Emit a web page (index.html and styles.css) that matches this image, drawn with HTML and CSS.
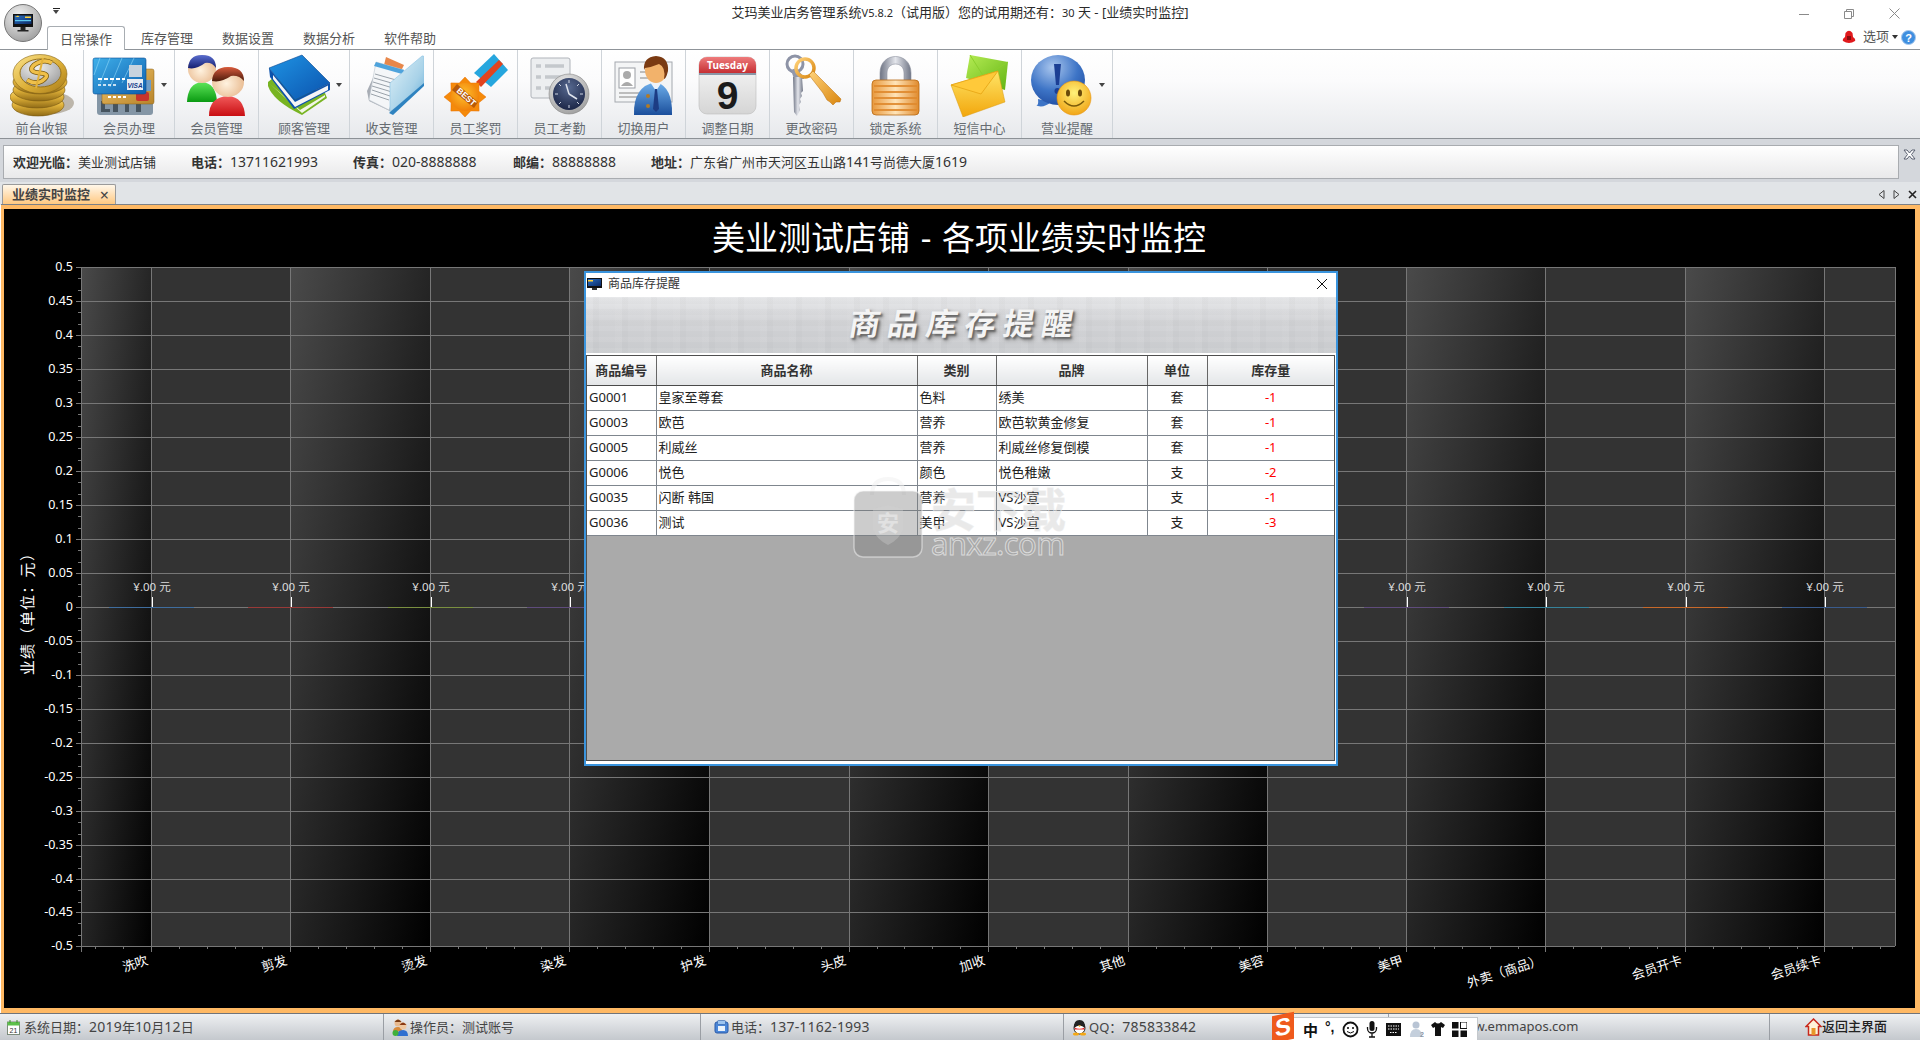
FILE: index.html
```html
<!DOCTYPE html>
<html lang="zh-CN">
<head>
<meta charset="utf-8">
<title>艾玛美业店务管理系统</title>
<link rel="stylesheet" href="styles.css">
</head>
<body>
<svg class="defs" aria-hidden="true">
  <defs>
    <linearGradient id="gGold" x1="0" y1="0" x2="0" y2="1"><stop offset="0" stop-color="#ffeb9a"/><stop offset=".5" stop-color="#e3b43a"/><stop offset="1" stop-color="#8f6a16"/></linearGradient>
    <linearGradient id="gGoldTop" x1="0" y1="0" x2="1" y2="1"><stop offset="0" stop-color="#fbe48e"/><stop offset=".55" stop-color="#dcae36"/><stop offset="1" stop-color="#a57a1a"/></linearGradient>
    <radialGradient id="gSilver" cx=".4" cy=".3" r=".8"><stop offset="0" stop-color="#f2f2f2"/><stop offset="1" stop-color="#989898"/></radialGradient>
    <linearGradient id="gCard" x1="0" y1="0" x2="1" y2="1"><stop offset="0" stop-color="#3fb0ea"/><stop offset="1" stop-color="#0f5fae"/></linearGradient>
    <linearGradient id="gCard2" x1="0" y1="0" x2="1" y2="1"><stop offset="0" stop-color="#f0c46a"/><stop offset="1" stop-color="#b8842a"/></linearGradient>
    <linearGradient id="gBook" x1="0" y1="0" x2="1" y2="1"><stop offset="0" stop-color="#1f94e4"/><stop offset="1" stop-color="#0b52ad"/></linearGradient>
    <radialGradient id="gSkin" cx=".45" cy=".55" r=".6"><stop offset="0" stop-color="#fff2df"/><stop offset="1" stop-color="#e8b98e"/></radialGradient>
    <linearGradient id="gGreen" x1="0" y1="0" x2="0" y2="1"><stop offset="0" stop-color="#5fe65a"/><stop offset="1" stop-color="#0a9a12"/></linearGradient>
    <linearGradient id="gRed" x1="0" y1="0" x2="0" y2="1"><stop offset="0" stop-color="#f25a5a"/><stop offset="1" stop-color="#c80e12"/></linearGradient>
    <linearGradient id="gHairB" x1="0" y1="0" x2="0" y2="1"><stop offset="0" stop-color="#5a6ed0"/><stop offset="1" stop-color="#141e70"/></linearGradient>
    <linearGradient id="gHairR" x1="0" y1="0" x2="0" y2="1"><stop offset="0" stop-color="#d85a3c"/><stop offset="1" stop-color="#4a1a0a"/></linearGradient>
    <linearGradient id="gGlass" x1="0" y1="0" x2="1" y2="1"><stop offset="0" stop-color="#e2f2f8"/><stop offset=".6" stop-color="#a8d2e8"/><stop offset="1" stop-color="#5ea9d6"/></linearGradient>
    <radialGradient id="gSun" cx=".45" cy=".4" r=".65"><stop offset="0" stop-color="#ffc22e"/><stop offset="1" stop-color="#ef7a05"/></radialGradient>
    <radialGradient id="gNavy" cx=".5" cy=".3" r=".8"><stop offset="0" stop-color="#56688f"/><stop offset="1" stop-color="#141d3d"/></radialGradient>
    <linearGradient id="gSuit" x1="0" y1="0" x2="0" y2="1"><stop offset="0" stop-color="#6fb0ec"/><stop offset="1" stop-color="#1b4f9c"/></linearGradient>
    <linearGradient id="gCal" x1="0" y1="0" x2="0" y2="1"><stop offset="0" stop-color="#fafafa"/><stop offset="1" stop-color="#d5d5d5"/></linearGradient>
    <linearGradient id="gCalH" x1="0" y1="0" x2="0" y2="1"><stop offset="0" stop-color="#ee7b7b"/><stop offset="1" stop-color="#c52f33"/></linearGradient>
    <linearGradient id="gSteel" x1="0" y1="0" x2="1" y2="0"><stop offset="0" stop-color="#6e7484"/><stop offset=".5" stop-color="#e4e6ec"/><stop offset="1" stop-color="#707686"/></linearGradient>
    <linearGradient id="gKey" x1="0" y1="0" x2="1" y2="1"><stop offset="0" stop-color="#ffd27a"/><stop offset="1" stop-color="#d9860f"/></linearGradient>
    <linearGradient id="gLock" x1="0" y1="0" x2="1" y2="0"><stop offset="0" stop-color="#e8983c"/><stop offset=".5" stop-color="#ffe4b8"/><stop offset="1" stop-color="#e08a2c"/></linearGradient>
    <linearGradient id="gEnvY" x1="0" y1="0" x2="0" y2="1"><stop offset="0" stop-color="#ffe566"/><stop offset="1" stop-color="#f2a60c"/></linearGradient>
    <linearGradient id="gEnvG" x1="0" y1="0" x2="1" y2="1"><stop offset="0" stop-color="#b6ec54"/><stop offset="1" stop-color="#62b414"/></linearGradient>
    <radialGradient id="gBubble" cx=".4" cy=".25" r=".85"><stop offset="0" stop-color="#a9c6ee"/><stop offset=".55" stop-color="#3d74c6"/><stop offset="1" stop-color="#1c479c"/></radialGradient>
    <radialGradient id="gSmile" cx=".5" cy=".35" r=".7"><stop offset="0" stop-color="#fff27a"/><stop offset="1" stop-color="#f0a010"/></radialGradient>
    <linearGradient id="gBand" x1="0" y1="0" x2="1" y2="1"><stop offset="0" stop-color="#4a4a4a"/><stop offset="1" stop-color="#000"/></linearGradient>
    <linearGradient id="gScreen" x1="0" y1="0" x2="1" y2="1"><stop offset="0" stop-color="#2a6fc0"/><stop offset="1" stop-color="#0d2a66"/></linearGradient>
  </defs>
</svg>

<div class="app">
  <header class="head">
    <div class="head-top">
      <button class="qat" type="button"><span class="qat-line"></span><span class="caret"></span></button>
      <div class="title">艾玛美业店务管理系统<span class="tn">V5.8.2</span>（试用版）您的试用期还有<i class="cl">：</i><span class="tn">30</span> 天 - [业绩实时监控]</div>
      <div class="winctl">
        <svg width="10" height="10" viewBox="0 0 10 10"><path d="M0 5.500H10" class="wl"/></svg>
        <svg width="10" height="10" viewBox="0 0 10 10"><path d="M.5 2.500h7v7h-7zM2.500 2.500v-2h7v7h-2" class="wl"/></svg>
        <svg width="11" height="11" viewBox="0 0 11 11"><path d="M.5.5l10 10M10.500.5l-10 10" class="wl"/></svg>
      </div>
    </div>
    <div class="head-tabs">
      <div class="mtabs">
        <span class="mtab active">日常操作</span>
        <span class="mtab">库存管理</span>
        <span class="mtab">数据设置</span>
        <span class="mtab">数据分析</span>
        <span class="mtab">软件帮助</span>
      </div>
      <div class="opts">
        <svg width="14" height="14" viewBox="0 0 14 14"><path d="M3.500 3Q7-1.500 10.500 3L11 7Q14 9 13 11Q7 15 1 11Q0 9 3 7Z" fill="#e0191c"/><rect x="5" y="6" width="4" height="4" fill="#8a0c0e"/></svg>
        <span class="opts-t">选项</span><span class="caret dark"></span>
        <svg width="15" height="15" viewBox="0 0 15 15"><circle cx="7.500" cy="7.500" r="7" fill="#3f8fe0" stroke="#a8c8ec"/><text x="7.500" y="11.500" class="help-q">?</text></svg>
      </div>
    </div>
    <svg class="orb" width="40" height="40" viewBox="0 0 40 40">
      <circle cx="20" cy="20" r="18.500" fill="url(#gSilver)" stroke="#777"/>
      <rect x="10" y="11" width="20" height="13" fill="#111"/>
      <rect x="11.500" y="12.500" width="17" height="8.500" fill="url(#gScreen)"/>
      <path d="M12 14l3-1.500 1.500 1.500zM22 13.500h6v1.500h-6z" fill="#ffd23a"/>
      <path d="M12 17h16v1.200H12z" fill="#5ec8f0"/>
      <path d="M17.500 24h5v3h3v1.500h-11V27h3z" fill="#222"/>
    </svg>
  </header>

  <nav class="ribbon">
    <div class="rb">
      <svg class="ic" viewBox="0 0 64 64">
        <ellipse cx="40" cy="50" rx="24" ry="11" fill="#7a6a50" opacity=".45"/>
        <ellipse cx="28" cy="52" rx="26" ry="11" fill="url(#gGold)" stroke="#7a5a12" stroke-width=".6"/>
        <ellipse cx="27" cy="44" rx="27" ry="11" fill="url(#gGold)" stroke="#7a5a12" stroke-width=".6"/>
        <ellipse cx="29" cy="37" rx="26" ry="11" fill="url(#gGold)" stroke="#7a5a12" stroke-width=".6"/>
        <ellipse cx="30" cy="29" rx="27" ry="12" fill="url(#gGold)" stroke="#7a5a12" stroke-width=".6"/>
        <ellipse cx="30" cy="21" rx="27" ry="19.500" fill="url(#gGoldTop)" stroke="#8a6616" stroke-width=".6"/>
        <ellipse cx="30.500" cy="20" rx="20.500" ry="14" fill="url(#gSilver)" stroke="#9a7418"/>
        <path d="M42 10Q34 5 24 12Q17 19 30 20Q42 21 32 28Q25 32 17 27" fill="none" stroke="#7a5a12" stroke-width="5"/>
        <path d="M42 10Q34 5 24 12Q17 19 30 20Q42 21 32 28Q25 32 17 27" fill="none" stroke="#f0c04a" stroke-width="3.500"/>
        <path d="M33 5L26 35" stroke="#e3b23a" stroke-width="2"/>
      </svg>
      <span class="rb-t">前台收银</span>
    </div>
    <div class="rb wide">
      <div class="rb-row">
        <svg class="ic" viewBox="0 0 64 64">
          <rect x="5" y="38" width="56" height="24" rx="3" fill="#8496a6"/>
          <path d="M9 48v11h9v-3h-5v-8zM21 48h5v11h-5zM29 48h12v3h-4v8h-4V51h-4zM44 48h5v11h-5z" fill="#46545f"/>
          <rect x="10" y="16" width="52" height="35" rx="2" fill="url(#gCard2)" stroke="#8a6218" stroke-width=".5"/>
          <path d="M16 44h3M21 44h3M26 44h3M31 44h3" stroke="#fff" stroke-width="2"/>
          <rect x="44" y="39" width="13" height="9" rx="2" fill="#c8342c"/><rect x="50" y="27" width="9" height="11" fill="#6e9cc8"/>
          <rect x="1" y="5" width="53" height="36" rx="2" fill="url(#gCard)" stroke="#0c4f96" stroke-width=".6"/>
          <path d="M8 5L2 22M18 5L8 30M30 5L18 34M42 5L30 30" stroke="#8fd8fa" stroke-width="1" opacity=".6" fill="none"/>
          <rect x="37" y="12" width="13" height="12" fill="#c7d3de"/>
          <path d="M6 26h4M12 26h4M18 26h4M24 26h4M30 26h3" stroke="#fff" stroke-width="2"/>
          <path d="M6 32h3M11 32h3M16 32h3M21 32h3" stroke="#fff" stroke-width="1.500"/>
          <rect x="35" y="26" width="16" height="11" fill="#e8edf4"/>
          <text x="43" y="35" class="visa">VISA</text>
        </svg>
        <span class="caret"></span>
      </div>
      <span class="rb-t">会员办理</span>
    </div>
    <div class="rb">
      <svg class="ic" viewBox="0 0 64 64">
        <path d="M2 49Q3 30 17 29Q31 30 32 49Z" fill="url(#gGreen)"/>
        <ellipse cx="17" cy="16" rx="14" ry="14" fill="url(#gSkin)"/>
        <path d="M3 15Q4 2 17 2Q31 2 31 15Q27 9 20 10Q11 17 3 15Z" fill="url(#gHairB)"/>
        <path d="M24 63Q24 44 43 43Q59 44 60 63Z" fill="url(#gRed)"/>
        <ellipse cx="43" cy="29" rx="16" ry="15" fill="url(#gSkin)"/>
        <path d="M27 28Q28 14 43 14Q59 14 59 28Q54 22 46 23Q36 30 27 28Z" fill="url(#gHairR)"/>
      </svg>
      <span class="rb-t">会员管理</span>
    </div>
    <div class="rb wide">
      <div class="rb-row">
        <svg class="ic" viewBox="0 0 64 64">
          <path d="M1 29L6 25L58 40L60 45L35 62Q6 48 1 33Z" fill="#78b422"/>
          <path d="M3 31L33 57L58 42L58 44L35 60Z" fill="#f2f6e6"/>
          <path d="M2 15L28 47L63 30L63 37L27 56L3 24Z" fill="#0c52ac"/>
          <path d="M6 22L28 49L61 32.500L61 37L28 54L6 26Z" fill="#f5f5f5"/>
          <path d="M35 2L63 30L28 47L2 15Z" fill="url(#gBook)" stroke="#0a468f" stroke-width=".6" stroke-linejoin="round"/>
        </svg>
        <span class="caret"></span>
      </div>
      <span class="rb-t">顾客管理</span>
    </div>
    <div class="rb">
      <svg class="ic" viewBox="0 0 64 64">
        <path d="M7 38L18 14L40 16L34 60L9 48Z" fill="#a8adb5"/>
        <path d="M26 4L44 12L40 20L24 12Z" fill="#e8874a"/>
        <path d="M16 9L44 17L29 57L9 47Z" fill="#f4f6f8" stroke="#bcc4cc" stroke-width=".6"/>
        <path d="M16 9L44 17L42 21L14 13Z" fill="#4ea3dc"/>
        <path d="M15 21L36 27M14 25L35 31M13 29L33 35M12 33L32 39M12 37L30 43M11 41L29 47" stroke="#9aa2aa" stroke-width="1"/>
        <path d="M30 30L62 3Q64 2 64 5V31L30 59Z" fill="url(#gGlass)" stroke="#8cc3e4" stroke-width=".6"/>
        <path d="M29 60L64 30V33L33 62Z" fill="#2f83c0"/>
      </svg>
      <span class="rb-t">收支管理</span>
    </div>
    <div class="rb">
      <svg class="ic" viewBox="0 0 64 64">
        <path d="M30 20L50 1L64 17L47 34Z" fill="#26a6de"/>
        <path d="M32 29L55 7L59 11L37 34Z" fill="#e2431e"/>
        <polygon points="42,44 34.900,49.700 35.100,58.100 26.700,57.900 21,64 15.300,57.900 6.900,58.100 7.100,49.700 0,44 7.100,38.300 6.900,29.900 15.300,30.100 21,24 26.700,30.100 35.100,29.900 34.900,38.300" fill="#f58a0a" stroke="#e87006" stroke-width=".5"/>
        <circle cx="21" cy="44" r="14" fill="url(#gSun)"/>
        <path d="M8 37L13 31L34 49L30 55Z" fill="#b85a08"/>
        <text class="best" transform="translate(20.500 46) rotate(42)">BEST</text>
      </svg>
      <span class="rb-t">员工奖罚</span>
    </div>
    <div class="rb">
      <svg class="ic" viewBox="0 0 64 64">
        <rect x="3" y="5" width="39" height="40" rx="2" fill="#eceef0" stroke="#b0b4ba"/>
        <path d="M8 13h5M17 13h19M8 24h5M17 24h19M8 35h5M17 35h8" stroke="#c4c8cc" stroke-width="3.500"/>
        <circle cx="41" cy="41" r="20" fill="url(#gSilver)" stroke="#888" stroke-width=".6"/>
        <circle cx="41" cy="41" r="16" fill="url(#gNavy)"/>
        <path d="M41 41L38 31M41 41L49 46" stroke="#dfe4ee" stroke-width="1.500"/>
        <path d="M41 27v3M41 52v3M27 41h3M52 41h3M31 31l2 2M51 31l-2 2M31 51l2-2M51 51l-2-2" stroke="#cfd6e4"/>
      </svg>
      <span class="rb-t">员工考勤</span>
    </div>
    <div class="rb">
      <svg class="ic" viewBox="0 0 64 64">
        <rect x="3" y="9" width="57" height="40" fill="#f4f5f6" stroke="#a4a8ae"/>
        <rect x="7" y="15" width="16" height="20" fill="#fff" stroke="#9a9ea4"/>
        <circle cx="15" cy="22" r="4" fill="#aaa"/><path d="M9 33q6-8 12 0z" fill="#aaa"/>
        <path d="M7 40h20M7 44h20M28 19h14M28 25h14" stroke="#aaa" stroke-width="1.500"/>
        <path d="M22 62Q21 33 44 29Q61 34 60 62Z" fill="url(#gSuit)"/>
        <path d="M38 29l6 9 6-9z" fill="#eef3fa"/><path d="M43 36h2l2 20-3 3-3-3z" fill="#1c3c84"/>
        <circle cx="36" cy="43" r="2" fill="#b07a28"/><circle cx="36" cy="53" r="2" fill="#b07a28"/>
        <ellipse cx="44" cy="17" rx="11" ry="13" fill="#f2b26b"/>
        <path d="M32 17Q31 4 44 3Q57 4 56 18Q54 26 52 26Q54 14 47 11Q40 14 33 15Z" fill="#7a3a12"/>
      </svg>
      <span class="rb-t">切换用户</span>
    </div>
    <div class="rb">
      <svg class="ic" viewBox="0 0 64 64">
        <rect x="3" y="4" width="57" height="57" rx="8" fill="url(#gCal)" stroke="#bcbcbc" stroke-width=".6"/>
        <path d="M3 20V12a8 8 0 0 1 8-8h41a8 8 0 0 1 8 8v8z" fill="url(#gCalH)"/>
        <rect x="3" y="20" width="57" height="2" fill="#8a96a6"/>
        <text x="31.500" y="16" class="cal-d">Tuesday</text>
        <text x="31.500" y="56" class="cal-n">9</text>
      </svg>
      <span class="rb-t">调整日期</span>
    </div>
    <div class="rb">
      <svg class="ic" viewBox="0 0 64 64">
        <circle cx="15" cy="11" r="8" fill="none" stroke="#8d93a6" stroke-width="3"/>
        <path d="M11 17L14 26H24V24L16 15Z" fill="#9298aa"/>
        <path d="M13 24h9l1 14-2 2 1 3-2 3 1 3-2 3 1 5-3 6-3-4z" fill="url(#gSteel)"/>
        <circle cx="25" cy="15" r="9" fill="none" stroke="url(#gKey)" stroke-width="3.500"/>
        <path d="M29 22L33 18L61 46L60 49L56 49L53 52L50 49L47 47L43 40Z" fill="url(#gKey)" stroke="#b96f10" stroke-width=".5"/>
      </svg>
      <span class="rb-t">更改密码</span>
    </div>
    <div class="rb">
      <svg class="ic" viewBox="0 0 64 64">
        <path d="M16 30V20C16 -2 47 -2 47 20V30H40V20C40 8 23 8 23 20V30Z" fill="url(#gSteel)" stroke="#8a8f9c" stroke-width=".6"/>
        <rect x="8" y="27" width="47" height="35" rx="4" fill="url(#gLock)" stroke="#b86a14" stroke-width=".8"/>
        <path d="M10 33h43M10 39h43M10 45h43M10 51h43M10 57h43" stroke="#e08a2e" stroke-width="2.200" opacity=".9"/>
      </svg>
      <span class="rb-t">锁定系统</span>
    </div>
    <div class="rb">
      <svg class="ic" viewBox="0 0 64 64">
        <path d="M22 2L60 9L57 37L18 25Z" fill="url(#gEnvG)"/>
        <path d="M22 2L36 24L60 9" fill="none" stroke="#8bcf2e"/>
        <path d="M3 32L50 18L57 49L15 64Z" fill="url(#gEnvY)" stroke="#d99a10" stroke-width=".5"/>
        <path d="M3 32L33 41L50 18Z" fill="#ffc93a" stroke="#e6a312" stroke-width=".8"/>
      </svg>
      <span class="rb-t">短信中心</span>
    </div>
    <div class="rb wide">
      <div class="rb-row">
        <svg class="ic" viewBox="0 0 64 64">
          <path d="M8 46Q9 54 5 52Q13 56 21 49Z" fill="#3d74c6"/>
          <ellipse cx="28" cy="27" rx="27" ry="25" fill="url(#gBubble)"/>
          <path d="M24 11h7l-2 21h-3z" fill="#1c3f94"/><circle cx="27.500" cy="38" r="3" fill="#1c3f94"/>
          <circle cx="44" cy="45" r="17" fill="url(#gSmile)" stroke="#e8930e" stroke-width=".6"/>
          <ellipse cx="38" cy="40" rx="2" ry="3.500" fill="#6a4a0a"/><ellipse cx="50" cy="40" rx="2" ry="3.500" fill="#6a4a0a"/>
          <path d="M34 48Q44 58 54 48" fill="none" stroke="#7a5a0a" stroke-width="1.500"/>
        </svg>
        <span class="caret"></span>
      </div>
      <span class="rb-t">营业提醒</span>
    </div>
  </nav>

  <div class="infostrip">
    <div class="infobox">
      <span class="inf w1"><b>欢迎光临<i class="cl">：</i></b>美业测试店铺</span>
      <span class="inf w2"><b>电话<i class="cl">：</i></b><span class="n">13711621993</span></span>
      <span class="inf w3"><b>传真<i class="cl">：</i></b><span class="n">020-8888888</span></span>
      <span class="inf w4"><b>邮编<i class="cl">：</i></b><span class="n">88888888</span></span>
      <span class="inf"><b>地址<i class="cl">：</i></b>广东省广州市天河区五山路<span class="n">141</span>号尚德大厦<span class="n">1619</span></span>
    </div>
    <svg class="infoclose" width="13" height="11" viewBox="0 0 13 11"><path d="M1 1h3l2.500 3L9 1h3L8.500 5.500 12 10H9L6.500 7 4 10H1l3.500-4.500z" fill="#fff" stroke="#5a6070"/></svg>
  </div>

  <div class="tabstrip">
    <div class="doctab">业绩实时监控<span class="doctab-x">×</span></div>
    <div class="tabnav">
      <svg width="7" height="9" viewBox="0 0 7 9"><path d="M6 .5v8L1 4.500z" fill="none" stroke="#444"/></svg>
      <svg width="7" height="9" viewBox="0 0 7 9"><path d="M1 .5v8l5-4z" fill="none" stroke="#444"/></svg>
      <svg width="9" height="9" viewBox="0 0 9 9"><path d="M1 1l7 7M8 1L1 8" stroke="#222" stroke-width="1.600"/></svg>
    </div>
  </div>

  <main class="panel">
    <svg class="chart" viewBox="4 209 1911 799">
      <rect x="81" y="267" width="1814" height="679" fill="#333"/>
      <g fill="url(#gBand)">
        <rect x="81" y="267" width="71" height="679"/>
        <rect x="290" y="267" width="140" height="679"/>
        <rect x="569" y="267" width="140" height="679"/>
        <rect x="849" y="267" width="139" height="679"/>
        <rect x="1128" y="267" width="139" height="679"/>
        <rect x="1406" y="267" width="140" height="679"/>
        <rect x="1685" y="267" width="139" height="679"/>
      </g>
      <path class="grid" d="M76 267.500H1895.500M76 301.500H1895M76 335.500H1895M76 369.500H1895M76 403.500H1895M76 437.500H1895M76 471.500H1895M76 505.500H1895M76 539.500H1895M76 573.500H1895M76 607.500H1895M76 641.500H1895M76 675.500H1895M76 709.500H1895M76 743.500H1895M76 777.500H1895M76 811.500H1895M76 845.500H1895M76 879.500H1895M76 912.500H1895M76 946.500H1895"/>
      <path class="grid" d="M81.500 267V952M151.500 267V952M290.500 267V952M430.500 267V952M569.500 267V952M709.500 267V952M849.500 267V952M988.500 267V952M1128.500 267V952M1267.500 267V952M1406.500 267V952M1545.500 267V952M1685.500 267V952M1824.500 267V952M1895.500 267V946"/>
      <path class="minor" d="M78 278.500h3M78 290.500h3M78 312.500h3M78 324.500h3M78 346.500h3M78 358.500h3M78 380.500h3M78 392.500h3M78 414.500h3M78 426.500h3M78 448.500h3M78 460.500h3M78 482.500h3M78 494.500h3M78 516.500h3M78 528.500h3M78 550.500h3M78 562.500h3M78 584.500h3M78 596.500h3M78 618.500h3M78 630.500h3M78 652.500h3M78 664.500h3M78 686.500h3M78 698.500h3M78 720.500h3M78 732.500h3M78 754.500h3M78 766.500h3M78 788.500h3M78 800.500h3M78 822.500h3M78 834.500h3M78 856.500h3M78 868.500h3M78 890.500h3M78 902.500h3M78 923.500h3M78 935.500h3"/>
      <path class="minor" d="M95.500 946v3M123.500 946v3M179.500 946v3M207.500 946v3M235.500 946v3M262.500 946v3M318.500 946v3M346.500 946v3M374.500 946v3M402.500 946v3M458.500 946v3M486.500 946v3M514.500 946v3M541.500 946v3M597.500 946v3M625.500 946v3M653.500 946v3M681.500 946v3M737.500 946v3M765.500 946v3M793.500 946v3M821.500 946v3M877.500 946v3M904.500 946v3M932.500 946v3M960.500 946v3M1016.500 946v3M1044.500 946v3M1072.500 946v3M1100.500 946v3M1156.500 946v3M1184.500 946v3M1211.500 946v3M1239.500 946v3M1295.500 946v3M1323.500 946v3M1351.500 946v3M1379.500 946v3M1434.500 946v3M1462.500 946v3M1490.500 946v3M1518.500 946v3M1573.500 946v3M1601.500 946v3M1629.500 946v3M1657.500 946v3M1713.500 946v3M1741.500 946v3M1769.500 946v3M1797.500 946v3M1852.500 946v3M1880.500 946v3"/>

      <g class="seg">
        <path d="M109 607.500h85" stroke="#3f6d9e"/><path d="M248 607.500h85" stroke="#993a38"/><path d="M388 607.500h85" stroke="#7a8f40"/><path d="M527 607.500h85" stroke="#5f4c7c"/>
        <path d="M1364 607.500h85" stroke="#5f4c7c"/><path d="M1504 607.500h85" stroke="#36829a"/><path d="M1643 607.500h85" stroke="#c8692a"/><path d="M1782 607.500h85" stroke="#3a5b8c"/>
      </g>
      <path class="whitetick" d="M152.500 597V607M291.500 597V607M431.500 597V607M570.500 597V607M1407.500 597V607M1546.500 597V607M1686.500 597V607M1825.500 597V607"/>

      <text class="title-c" x="959" y="250">美业测试店铺 - 各项业绩实时监控</text>
      <text class="ylab" x="73" y="271">0.5</text>
      <text class="ylab" x="73" y="305">0.45</text>
      <text class="ylab" x="73" y="339">0.4</text>
      <text class="ylab" x="73" y="373">0.35</text>
      <text class="ylab" x="73" y="407">0.3</text>
      <text class="ylab" x="73" y="441">0.25</text>
      <text class="ylab" x="73" y="475">0.2</text>
      <text class="ylab" x="73" y="509">0.15</text>
      <text class="ylab" x="73" y="543">0.1</text>
      <text class="ylab" x="73" y="577">0.05</text>
      <text class="ylab" x="73" y="611">0</text>
      <text class="ylab" x="73" y="645">-0.05</text>
      <text class="ylab" x="73" y="679">-0.1</text>
      <text class="ylab" x="73" y="713">-0.15</text>
      <text class="ylab" x="73" y="747">-0.2</text>
      <text class="ylab" x="73" y="781">-0.25</text>
      <text class="ylab" x="73" y="815">-0.3</text>
      <text class="ylab" x="73" y="849">-0.35</text>
      <text class="ylab" x="73" y="883">-0.4</text>
      <text class="ylab" x="73" y="916">-0.45</text>
      <text class="ylab" x="73" y="950">-0.5</text>
      <text class="ytitle" transform="translate(33 610) rotate(-90)">业绩（单位<tspan class="cl">：</tspan>元）</text>

      <text class="val" x="152" y="591">¥.00 元</text>
      <text class="val" x="291" y="591">¥.00 元</text>
      <text class="val" x="431" y="591">¥.00 元</text>
      <text class="val" x="570" y="591">¥.00 元</text>
      <text class="val" x="1407" y="591">¥.00 元</text>
      <text class="val" x="1546" y="591">¥.00 元</text>
      <text class="val" x="1686" y="591">¥.00 元</text>
      <text class="val" x="1825" y="591">¥.00 元</text>

      <text class="xlab" transform="translate(149 964) rotate(-18)">洗吹</text>
      <text class="xlab" transform="translate(288 964) rotate(-18)">剪发</text>
      <text class="xlab" transform="translate(428 964) rotate(-18)">烫发</text>
      <text class="xlab" transform="translate(567 964) rotate(-18)">染发</text>
      <text class="xlab" transform="translate(707 964) rotate(-18)">护发</text>
      <text class="xlab" transform="translate(847 964) rotate(-18)">头皮</text>
      <text class="xlab" transform="translate(986 964) rotate(-18)">加收</text>
      <text class="xlab" transform="translate(1126 964) rotate(-18)">其他</text>
      <text class="xlab" transform="translate(1265 964) rotate(-18)">美容</text>
      <text class="xlab" transform="translate(1404 964) rotate(-18)">美甲</text>
      <text class="xlab" transform="translate(1543 964) rotate(-18)">外卖（商品）</text>
      <text class="xlab" transform="translate(1683 964) rotate(-18)">会员开卡</text>
      <text class="xlab" transform="translate(1822 964) rotate(-18)">会员续卡</text>
    </svg>
  </main>

  <footer class="status">
    <div class="st st1">
      <svg width="13" height="15" viewBox="0 0 13 15"><rect x=".5" y="2" width="12" height="12.500" fill="#fff" stroke="#7a8a7a"/><rect x=".5" y="2" width="12" height="3.500" fill="#5cc04a"/><path d="M3 0v3M10 0v3" stroke="#3a8a2a"/><text x="6.500" y="13" class="st-d">21</text></svg>
      <span>系统日期<i class="cl">：</i><span class="n">2019</span>年<span class="n">10</span>月<span class="n">12</span>日</span>
    </div>
    <div class="st st2">
      <svg width="17" height="19" viewBox="0 0 17 19"><circle cx="6" cy="5" r="3.500" fill="#e8b98e"/><path d="M2.500 4Q6-1 9.500 4Z" fill="#7a3a12"/><path d="M1 14Q1 9 6 9Q10 9 10 13Z" fill="#d88a3a"/><circle cx="11" cy="8" r="3.500" fill="#f0c8a0"/><path d="M7.500 7Q11 2 14.500 7Z" fill="#8a3a12"/><path d="M5 18Q5 12 11 12Q16 12 16 18Z" fill="#2f6fd0"/><circle cx="3.500" cy="15" r="3" fill="#3fb03a"/></svg>
      <span>操作员<i class="cl">：</i>测试账号</span>
    </div>
    <div class="st st3">
      <svg width="15" height="14" viewBox="0 0 15 14"><rect x="1" y="2" width="13" height="11" rx="2" fill="#4a86d8" stroke="#2a5aa8"/><rect x="3.500" y=".5" width="8" height="4" rx="1" fill="#9cc4f0" stroke="#2a5aa8" stroke-width=".6"/><rect x="4" y="6" width="7" height="5" fill="#eaf2fb"/></svg>
      <span>电话<i class="cl">：</i><span class="n">137-1162-1993</span></span>
    </div>
    <div class="st st4">
      <svg width="15" height="17" viewBox="0 0 15 17"><ellipse cx="7.500" cy="9" rx="5.500" ry="6" fill="#fff" stroke="#222"/><path d="M2 9Q1.500 1 7.500 1T13 9Q7.500 4 2 9Z" fill="#222"/><path d="M2.500 8.500Q7.500 11 12.500 8.500L12 10.500H3Z" fill="#e22"/><path d="M6 6.500h3L7.500 8Z" fill="#f5a814"/><ellipse cx="4" cy="15" rx="3" ry="1.500" fill="#f5a814"/><ellipse cx="11" cy="15" rx="3" ry="1.500" fill="#f5a814"/></svg>
      <span>QQ<i class="cl">：</i><span class="n">785833842</span></span>
    </div>
    <div class="st st5"><span>www.emmapos.com</span></div>
    <div class="st st6">
      <svg width="17" height="18" viewBox="0 0 17 18"><path d="M8.500 1L1 8.500h2.500V17h10V8.500H16Z" fill="#fff3d8" stroke="#c8281c" stroke-width="1.500"/><rect x="6.500" y="10" width="4" height="7" fill="#e8962a"/></svg>
      <span>返回主界面</span>
    </div>
  </footer>

  <section class="dialog">
    <div class="dlg-title">
      <svg width="15" height="15" viewBox="0 0 15 15"><rect x="0" y="1" width="15" height="10" fill="#111"/><rect x="1" y="2" width="13" height="7" fill="url(#gScreen)"/><path d="M1 3h5v1.500H1z" fill="#ffd23a"/><path d="M5 11h5v2H5z" fill="#333"/></svg>
      <span class="dlg-name">商品库存提醒</span>
      <svg class="dlg-x" width="12" height="12" viewBox="0 0 12 12"><path d="M1 1l10 10M11 1L1 11" stroke="#111" fill="none"/></svg>
    </div>
    <div class="dlg-banner"><span class="dlg-cal">商品库存提醒</span></div>
    <div class="dlg-grid">
      <table class="tbl">
        <colgroup><col class="c1"><col class="c2"><col class="c3"><col class="c4"><col class="c5"><col class="c6"></colgroup>
        <thead><tr><th>商品编号</th><th>商品名称</th><th>类别</th><th>品牌</th><th>单位</th><th>库存量</th></tr></thead>
        <tbody>
          <tr><td>G0001</td><td>皇家至尊套</td><td>色料</td><td>绣美</td><td class="ctr">套</td><td class="qty">-1</td></tr>
          <tr><td>G0003</td><td>欧芭</td><td>营养</td><td>欧芭软黄金修复</td><td class="ctr">套</td><td class="qty">-1</td></tr>
          <tr><td>G0005</td><td>利威丝</td><td>营养</td><td>利威丝修复倒模</td><td class="ctr">套</td><td class="qty">-1</td></tr>
          <tr><td>G0006</td><td>悦色</td><td>颜色</td><td>悦色稚嫩</td><td class="ctr">支</td><td class="qty">-2</td></tr>
          <tr><td>G0035</td><td>闪断 韩国</td><td>营养</td><td>VS沙宣</td><td class="ctr">支</td><td class="qty">-1</td></tr>
          <tr><td>G0036</td><td>测试</td><td>美甲</td><td>VS沙宣</td><td class="ctr">支</td><td class="qty">-3</td></tr>
        </tbody>
      </table>
    </div>
  </section>

  <div class="wm">
    <svg class="wm-bag" width="72" height="82" viewBox="0 0 72 82">
      <path d="M20 18Q20 2 36 2T52 18" fill="none" stroke="rgba(240,240,240,.55)" stroke-width="4"/>
      <rect x="2" y="14" width="68" height="66" rx="9" fill="rgba(120,120,120,.38)" stroke="rgba(245,245,245,.5)" stroke-width="1.500"/>
      <path d="M21 32L36 28L51 32V52Q48 62 36 68Q24 62 21 52Z" fill="rgba(210,210,210,.35)"/>
      <text x="36" y="54" class="wm-an">安</text>
    </svg>
    <div class="wm-text"><span class="wm-cn">安下载</span><span class="wm-en">anxz.com</span></div>
  </div>

  <div class="ime">
    <span class="ime-s">S</span>
    <span class="ime-zh">中</span>
    <span class="ime-p">°,</span>
    <svg width="17" height="17" viewBox="0 0 17 17"><circle cx="8.500" cy="8.500" r="7" fill="#fff" stroke="#111" stroke-width="1.800"/><circle cx="6" cy="7" r="1"/><circle cx="11" cy="7" r="1"/><path d="M5 10.500q3.500 3 7 0" fill="none" stroke="#111"/></svg>
    <svg width="12" height="18" viewBox="0 0 12 18"><rect x="3.500" y="1" width="5" height="10" rx="2.500" fill="#111"/><path d="M1.500 7v1.500a4.500 4.500 0 0 0 9 0V7M6 13v4M3 17h6" fill="none" stroke="#111" stroke-width="1.300"/></svg>
    <svg width="17" height="15" viewBox="0 0 17 15"><rect x="1" y="1" width="15" height="13" fill="#111"/><path d="M3 4h11M3 7h11M5 10.500h7" stroke="#fff" stroke-dasharray="1.500 1" /></svg>
    <svg width="15" height="18" viewBox="0 0 15 18"><circle cx="7" cy="5" r="3.500" fill="#b8c4d4"/><path d="M1 17Q1 9 7 9T13 17Z" fill="#c4cfdc"/><text x="11" y="17" class="ime-2">2</text></svg>
    <svg width="14" height="16" viewBox="0 0 14 16"><path d="M4 1L0 4l2 3 2-1v9h6V6l2 1 2-3-4-3Q7 4 4 1Z" fill="#111"/></svg>
    <svg width="15" height="15" viewBox="0 0 15 15"><rect x="0" y="0" width="6.500" height="6.500" fill="#111"/><rect x="8.500" y="0" width="6.500" height="6.500" fill="none" stroke="#111"/><rect x="0" y="8.500" width="6.500" height="6.500" fill="#111"/><rect x="8.500" y="8.500" width="6.500" height="6.500" fill="#111"/></svg>
  </div>
</div>
</body>
</html>
```

FILE: styles.css
```css
* { box-sizing: border-box; }
html, body { margin: 0; height: 100%; overflow: hidden; }
body { font: 13px/1.2 "Noto Sans", "Noto Sans CJK SC", sans-serif; color: #333; background: #fff; text-spacing-trim: space-all; }
.defs { display: block; width: 0; height: 0; }
.app { position: relative; display: flex; flex-direction: column; height: 1040px; }
.cl { font-family: "Noto Sans CJK TC", sans-serif; font-style: normal; }
.n { font-size: 14px; }
.status .n { letter-spacing: .2px; }
.tn { font-size: 11px; }

/* header */
.head { position: relative; height: 50px; background: #fff; border-bottom: 1px solid #8f9499; flex: none; }
.head-top { display: flex; height: 26px; position: relative; align-items: center; justify-content: center; }
.title { color: #2a2a2a; font-size: 13px; margin-top: -1px; }
.qat { position: absolute; left: 52px; top: 8px; width: 8px; height: 9px; border: 0; padding: 0; background: none; display: flex; flex-direction: column; align-items: center; gap: 1px; }
.qat-line { width: 7px; height: 1px; background: #222; }
.caret { display: block; width: 0; height: 0; border: 3px solid transparent; border-top: 4px solid #444; border-bottom: 0; flex: none; }
.winctl { position: absolute; right: 20px; top: 8px; display: flex; gap: 35px; align-items: center; }
.wl { fill: none; stroke: #8a8a8a; stroke-width: 1; }
.head-tabs { display: flex; justify-content: space-between; height: 23px; padding-left: 47px; }
.mtabs { display: flex; gap: 3px; }
.mtab { width: 78px; height: 24px; text-align: center; line-height: 25px; color: #555; font-size: 13px; }
.mtab.active { background: #fff; border: 1px solid #a8adb2; border-bottom: 0; border-radius: 3px 3px 0 0; line-height: 24px; position: relative; }
.opts { display: flex; align-items: center; height: 22px; margin-right: 4px; }
.opts-t { margin-left: 7px; color: #555; font-size: 13px; }
.opts .caret { margin: 0 3px; }
.caret.dark { border-top-color: #333; }
.help-q { font: bold 11px "Liberation Sans", sans-serif; fill: #fff; text-anchor: middle; }
.orb { position: absolute; left: 3px; top: 3px; }

/* ribbon */
.ribbon { display: flex; height: 89px; flex: none; background: linear-gradient(#fff, #fbfbfc 35%, #e7e9ec); border-bottom: 1px solid #8c9196; }
.rb { width: 84px; height: 88px; flex: none; display: flex; flex-direction: column; align-items: center; border-right: 1px solid #cfd4d9; padding-top: 3px; }
.rb.wide { width: 91px; align-items: stretch; }
.rb-row { display: flex; align-items: center; padding-left: 8px; gap: 5px; }
.ic { display: block; width: 64px; height: 64px; flex: none; }
.rb-t { display: block; text-align: center; color: #666c72; font-size: 13px; line-height: 17px; margin-top: 3px; }
.visa { font: italic bold 6.500px "Liberation Sans", sans-serif; fill: #123a8a; text-anchor: middle; }
.best { font: bold 8.500px "Liberation Sans", sans-serif; fill: #fff; text-anchor: middle; }
.cal-d { font: bold 10px "Noto Sans", sans-serif; fill: #fff; text-anchor: middle; }
.cal-n { font: bold 39px "Liberation Sans", sans-serif; fill: #1b1b1b; text-anchor: middle; }

/* info strip */
.infostrip { display: flex; height: 43px; flex: none; background: #d4d7dc; padding: 6px 0 3px 3px; position: relative; }
.infobox { width: 1896px; height: 34px; border: 1px solid #a9acb0; background: linear-gradient(#fff, #e9e9ea); display: flex; align-items: center; padding-left: 9px; }
.inf { color: #333; font-size: 13px; white-space: nowrap; }
.inf b { font-weight: 700; }
.w1 { width: 178px; }
.w2 { width: 162px; }
.w3 { width: 160px; }
.w4 { width: 138px; }
.infoclose { margin: 4px 0 0 4px; flex: none; }

/* doc tabs */
.tabstrip { display: flex; justify-content: space-between; align-items: flex-end; height: 23px; flex: none; background: #e1e4e7; padding-left: 2px; }
.doctab { width: 114px; height: 21px; display: flex; align-items: center; justify-content: space-between; padding: 0 6px 0 9px; border: 1px solid #9a9a9a; border-bottom: 0; border-radius: 2px 2px 0 0; background: linear-gradient(#fff7ea, #ffc67c); font-size: 13px; font-weight: 700; color: #444; }
.doctab-x { font-size: 16px; line-height: 1; font-weight: 400; }
.tabnav { display: flex; align-items: center; gap: 8px; height: 21px; padding-right: 3px; }

/* panel + chart */
.panel { flex: 1; margin-left: 1px; border: solid #ffb964; border-width: 4px 5px 5px 3px; background: #000; box-shadow: 0 -1px #7c8086, 0 1px #70747a; min-height: 0; }
.chart { display: block; width: 1911px; height: 799px; }
.grid { fill: none; stroke: #777; stroke-width: 1; }
.minor { fill: none; stroke: #777; stroke-width: 1; }
.seg path { fill: none; stroke-width: 1; }
.whitetick { stroke: #fff; stroke-width: 1; fill: none; }
.title-c { fill: #fff; font: 33px "Noto Sans", "Noto Sans CJK SC", sans-serif; text-anchor: middle; word-spacing: 2px; }
.ylab { fill: #fff; font: 12.500px "Noto Sans", sans-serif; text-anchor: end; }
.ytitle { fill: #fff; font: 15px "Noto Sans CJK SC", sans-serif; text-anchor: middle; letter-spacing: 1.300px; }
.val { fill: #ddd; font: 11.500px "Noto Sans", "Noto Sans CJK SC", sans-serif; text-anchor: middle; }
.xlab { fill: #fff; font: 13px "Noto Sans CJK SC", sans-serif; text-anchor: end; }

/* status */
.status { display: flex; height: 27px; flex: none; background: linear-gradient(#eef0f2, #c4c8cd); border-top: 1px solid #70747a; font-size: 13px; color: #444; }
.st { display: flex; align-items: center; gap: 4px; height: 100%; border-left: 1px solid #9a9ea4; flex: none; }
.st1 { width: 383px; border-left: 0; padding-left: 7px; }
.st2 { width: 317px; padding-left: 8px; gap: 1px; }
.st3 { width: 363px; padding-left: 13px; gap: 2px; }
.st4 { width: 325px; padding-left: 8px; gap: 2px; }
.st5 { width: 381px; padding-left: 65px; }
.st6 { flex: 1; padding-left: 35px; gap: 0; color: #222; font-weight: 500; }
.st-d { font: 7px "Liberation Sans", sans-serif; fill: #333; text-anchor: middle; }

/* dialog window */
.dialog { position: absolute; left: 584px; top: 271px; width: 754px; height: 495px; border: 2px solid #3a94dd; background: #fff; display: flex; flex-direction: column; }
.dlg-title { display: flex; align-items: center; height: 24px; flex: none; padding: 0 0 2px 1px; gap: 6px; background: #fff; }
.dlg-name { font-size: 12px; color: #333; }
.dlg-x { margin-left: auto; margin-right: 8px; }
.dlg-banner { height: 56px; flex: none; display: flex; align-items: center; justify-content: center;
  background:
    repeating-linear-gradient(90deg, rgba(255,255,255,.04) 0 7px, rgba(0,0,0,.015) 7px 13px, rgba(255,255,255,0) 13px 29px),
    repeating-linear-gradient(0deg, rgba(255,255,255,.03) 0 5px, rgba(0,0,0,.012) 5px 11px),
    linear-gradient(#e6e7e9, #d2d3d6 45%, #cbcdd0 100%); }
.dlg-cal { font: 700 31px "Noto Sans CJK SC", sans-serif; letter-spacing: 7.500px; margin: 0 0 8px 8px; color: #f4f4f4; transform: skewX(-10deg); text-shadow: 2px 2px 2px #666, 3px 3px 4px #888; }
.dlg-grid { flex: 1; margin: 2px 1px 3px 0; border: 1px solid #4f4f4f; background: #aaa; min-height: 0; }
.tbl { border-collapse: collapse; table-layout: fixed; width: 747px; font-size: 13px; color: #222; }
.c1 { width: 69px; }
.c2 { width: 261px; }
.c3 { width: 79px; }
.c4 { width: 151px; }
.c5 { width: 60px; }
.c6 { width: 127px; }
.tbl th { height: 29px; padding: 1px 0 0; font-size: 13px; font-weight: 700; color: #333; background: linear-gradient(#fff, #e4e6e8); border: 1px solid #666; border-top: 0; border-bottom-color: #4a4a4a; }
.tbl td { height: 25px; padding: 0 2px; background: #fff; border: 1px solid #7f868e; white-space: nowrap; }
.tbl th:first-child, .tbl td:first-child { border-left: 0; }
.tbl th:last-child, .tbl td:last-child { border-right: 0; }
.ctr { text-align: center; }
.qty { text-align: center; color: #f00; }

/* watermark */
.wm { position: absolute; left: 852px; top: 477px; display: flex; gap: 7px; pointer-events: none; }
.wm-bag { display: block; }
.wm-an { font: 700 22px "Noto Sans CJK SC", sans-serif; fill: rgba(245,245,245,.5); text-anchor: middle; }
.wm-text { display: flex; flex-direction: column; padding-top: 8px; }
.wm-cn { font: 700 45px/46px "Noto Sans CJK SC", sans-serif; color: rgba(140,140,140,.2); -webkit-text-stroke: 1px rgba(235,235,235,.75); }
.wm-en { font: 31px/24px "Noto Sans", sans-serif; color: rgba(140,140,140,.15); -webkit-text-stroke: 1px rgba(235,235,235,.75); letter-spacing: -.6px; }

/* input method bar */
.ime { position: absolute; left: 1272px; top: 1017px; width: 206px; height: 23px; display: flex; align-items: center; gap: 7px; background: #fff; border: 1px solid #c4c8cc; border-bottom: 0; }
.ime-s { width: 22px; height: 27px; margin: -4px 2px 0 -1px; background: #ef5a1c; color: #fff; font: 700 24px/26px "Liberation Sans", sans-serif; text-align: center; transform: skewY(-12deg); flex: none; }
.ime-zh { font: 700 15px "Noto Sans CJK SC", sans-serif; color: #111; }
.ime-p { font: 700 14px/14px "Liberation Sans", sans-serif; color: #111; margin-top: -4px; }
.ime-2 { font: 700 7px "Liberation Sans", sans-serif; fill: #8a96a6; }
```
